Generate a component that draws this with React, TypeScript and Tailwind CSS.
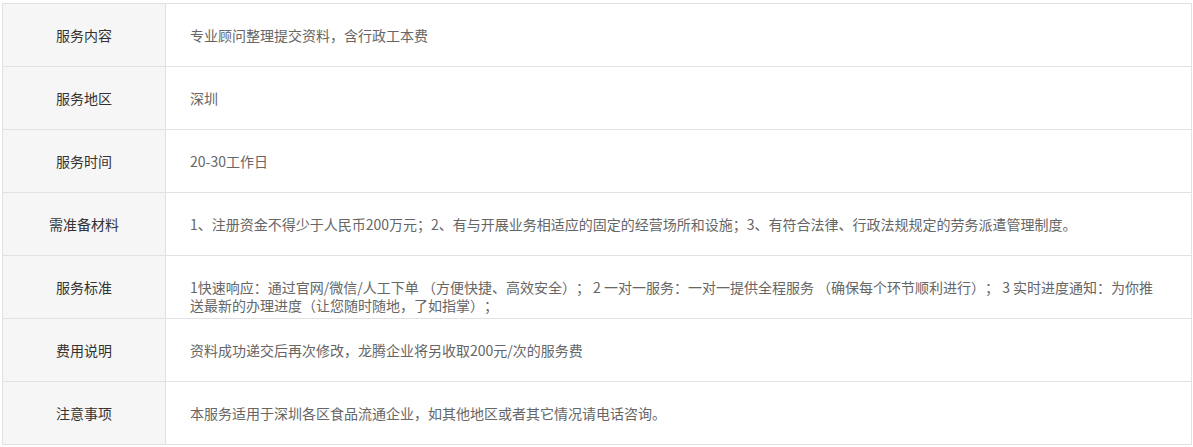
import React from 'react';

type Row = {
  /** 左侧标题 */
  label: string;
  /** 右侧内容 */
  content: string;
};

const rows: Row[] = [
  { label: '服务内容', content: '专业顾问整理提交资料，含行政工本费' },
  { label: '服务地区', content: '深圳' },
  { label: '服务时间', content: '20-30工作日' },
  {
    label: '需准备材料',
    content:
      '1、注册资金不得少于人民币200万元；2、有与开展业务相适应的固定的经营场所和设施；3、有符合法律、行政法规规定的劳务派遣管理制度。',
  },
  {
    label: '服务标准',
    content:
      '1快速响应：通过官网/微信/人工下单 （方便快捷、高效安全）； 2 一对一服务：一对一提供全程服务 （确保每个环节顺利进行）； 3 实时进度通知：为你推送最新的办理进度（让您随时随地，了如指掌）；',
  },
  { label: '费用说明', content: '资料成功递交后再次修改，龙腾企业将另收取200元/次的服务费' },
  { label: '注意事项', content: '本服务适用于深圳各区食品流通企业，如其他地区或者其它情况请电话咨询。' },
];

const App: React.FC = () => {
  return (
    <div className="h-[447px] w-[1193px] bg-white pl-[2px] pt-[3px] font-['Microsoft_YaHei','Noto_Sans_CJK_SC',sans-serif] text-[14px] [text-spacing-trim:space-all]">
      <div className="w-[1190px] border-x border-t border-[#e1e1e1]">
        {rows.map((row) => (
          <div key={row.label} className="flex h-[63px] border-b border-[#e1e1e1]">
            <div className="flex w-[163px] shrink-0 items-center justify-center border-r border-[#e1e1e1] bg-[#f6f6f6] text-[#333]">
              {row.label}
            </div>
            <div className="flex-1 px-[24px] pt-[22px] leading-[18px] text-[#666]">
              {row.content}
            </div>
          </div>
        ))}
      </div>
    </div>
  );
};

export default App;
